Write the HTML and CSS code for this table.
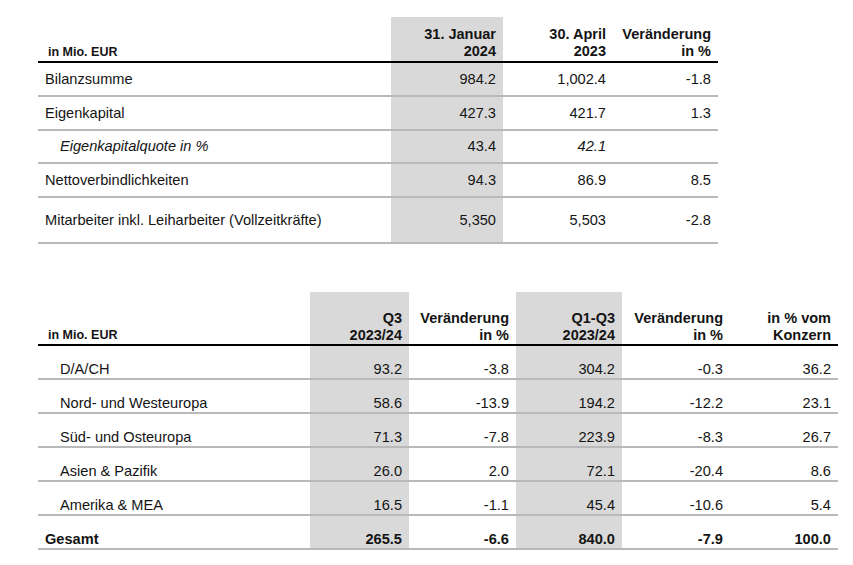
FILE: index.html
```html
<!DOCTYPE html>
<html lang="de">
<head>
<meta charset="utf-8">
<title>Kennzahlen</title>
<link rel="stylesheet" href="styles.css">
</head>
<body>
<table class="fin top">
  <colgroup>
    <col class="t-lbl"><col class="t-c1"><col class="t-c2"><col class="t-c3">
  </colgroup>
  <thead>
    <tr class="head">
      <th class="lbl">in Mio. EUR</th>
      <th class="shade">31. Januar<br>2024</th>
      <th>30. April<br>2023</th>
      <th>Veränderung<br>in %</th>
    </tr>
  </thead>
  <tbody>
    <tr><td class="lbl">Bilanzsumme</td><td class="shade">984.2</td><td>1,002.4</td><td>-1.8</td></tr>
    <tr><td class="lbl">Eigenkapital</td><td class="shade">427.3</td><td>421.7</td><td>1.3</td></tr>
    <tr class="quote"><td class="lbl ind it">Eigenkapitalquote in %</td><td class="shade">43.4</td><td class="it">42.1</td><td></td></tr>
    <tr><td class="lbl">Nettoverbindlichkeiten</td><td class="shade">94.3</td><td>86.9</td><td>8.5</td></tr>
    <tr class="tall"><td class="lbl">Mitarbeiter inkl. Leiharbeiter (Vollzeitkräfte)</td><td class="shade">5,350</td><td>5,503</td><td>-2.8</td></tr>
  </tbody>
</table>

<table class="fin bottom">
  <colgroup>
    <col class="b-lbl"><col class="b-c1"><col class="b-c2"><col class="b-c3"><col class="b-c4"><col class="b-c5">
  </colgroup>
  <thead>
    <tr class="head">
      <th class="lbl">in Mio. EUR</th>
      <th class="shade">Q3<br>2023/24</th>
      <th>Veränderung<br>in %</th>
      <th class="shade">Q1-Q3<br>2023/24</th>
      <th>Veränderung<br>in %</th>
      <th>in % vom<br>Konzern</th>
    </tr>
  </thead>
  <tbody>
    <tr><td class="lbl ind">D/A/CH</td><td class="shade">93.2</td><td>-3.8</td><td class="shade">304.2</td><td>-0.3</td><td>36.2</td></tr>
    <tr><td class="lbl ind">Nord- und Westeuropa</td><td class="shade">58.6</td><td>-13.9</td><td class="shade">194.2</td><td>-12.2</td><td>23.1</td></tr>
    <tr><td class="lbl ind">Süd- und Osteuropa</td><td class="shade">71.3</td><td>-7.8</td><td class="shade">223.9</td><td>-8.3</td><td>26.7</td></tr>
    <tr><td class="lbl ind">Asien &amp; Pazifik</td><td class="shade">26.0</td><td>2.0</td><td class="shade">72.1</td><td>-20.4</td><td>8.6</td></tr>
    <tr><td class="lbl ind">Amerika &amp; MEA</td><td class="shade">16.5</td><td>-1.1</td><td class="shade">45.4</td><td>-10.6</td><td>5.4</td></tr>
    <tr class="total"><td class="lbl">Gesamt</td><td class="shade">265.5</td><td>-6.6</td><td class="shade">840.0</td><td>-7.9</td><td>100.0</td></tr>
  </tbody>
</table>
</body>
</html>
```

FILE: styles.css
```css
html, body {
  margin: 0;
  padding: 0;
  background: #ffffff;
}

body {
  padding: 17px 0 0 38px;
  font-family: "Liberation Sans", Arial, sans-serif;
  color: #141414;
}

.fin {
  border-collapse: separate;
  border-spacing: 0;
  table-layout: fixed;
}

.fin th,
.fin td {
  box-sizing: border-box;
  padding: 0 7px 0 0;
  text-align: right;
  white-space: nowrap;
  font-size: 14.6px;
  line-height: 17px;
}

.fin th {
  font-weight: bold;
  font-size: 14.5px;
  vertical-align: bottom;
  padding-bottom: 1px;
  border-bottom: 2px solid #000;
}

.fin th.lbl {
  font-size: 12.5px;
  padding-left: 10px;
  padding-bottom: 0;
}

.fin td {
  border-bottom: 2px solid #b9b9b9;
  height: 34px;
}

.fin .lbl {
  text-align: left;
  padding-left: 7px;
}

.fin .ind {
  padding-left: 22px;
}

.fin .it {
  font-style: italic;
}

.fin .shade {
  background: #d9d9d9;
}

/* top table */
.top {
  width: 680px;
}

.t-lbl { width: 353px; }
.t-c1 { width: 112px; }
.t-c2 { width: 110px; }
.t-c3 { width: 105px; }

.top th {
  height: 46px;
}

.top td {
  vertical-align: middle;
}

.top .quote td {
  height: 33px;
}

.top .tall td {
  height: 46px;
}

/* bottom table */
.bottom {
  width: 800px;
  margin-top: 48px;
}

.b-lbl { width: 272px; }
.b-c1 { width: 99px; }
.b-c2 { width: 107px; }
.b-c3 { width: 106px; }
.b-c4 { width: 108px; }
.b-c5 { width: 108px; }

.bottom th {
  height: 54px;
  padding-bottom: 0;
}

.bottom th.lbl {
  padding-bottom: 0;
}

.bottom td {
  vertical-align: bottom;
  padding-bottom: 0;
}

.bottom .total td {
  font-weight: bold;
}
```
